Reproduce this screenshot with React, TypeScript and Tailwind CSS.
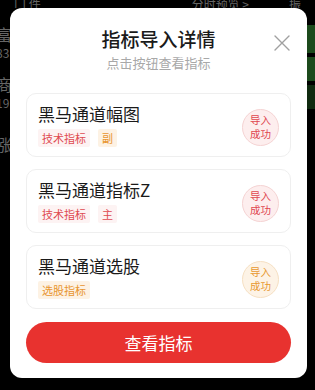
import React from "react";

type Tag = { text: string; tone: "red" | "orange" };
type Item = { title: string; tags: Tag[]; tone: "red" | "orange" };

const items: Item[] = [
  { title: "黑马通道幅图", tags: [{ text: "技术指标", tone: "red" }, { text: "副", tone: "orange" }], tone: "red" },
  { title: "黑马通道指标Z", tags: [{ text: "技术指标", tone: "red" }, { text: "主", tone: "red" }], tone: "red" },
  { title: "黑马通道选股", tags: [{ text: "选股指标", tone: "orange" }], tone: "orange" },
];

function TagChip({ tag }: { tag: Tag }) {
  return (
    <span
      className={
        tag.tone === "red"
          ? "h-[18px] px-[4px] rounded-[2px] bg-[#fdf3f3] text-[#df4a50] text-[11px] leading-[18px]"
          : "h-[18px] px-[4px] rounded-[2px] bg-[#fdf2e4] text-[#e8952f] text-[11px] leading-[18px]"
      }
    >
      {tag.text}
    </span>
  );
}

function Badge({ tone }: { tone: "red" | "orange" }) {
  return (
    <div
      className={
        tone === "red"
          ? "w-[37px] h-[37px] rounded-full bg-[#fdeeee] border border-[#f5d3d3] flex flex-col items-center justify-center text-[#e0474f] text-[10.5px] leading-[14px]"
          : "w-[37px] h-[37px] rounded-full bg-[#fdf3e6] border border-[#f6e0c3] flex flex-col items-center justify-center text-[#e8982f] text-[10.5px] leading-[14px]"
      }
    >
      <span className="block">导入</span>
      <span className="block">成功</span>
    </div>
  );
}

export default function App() {
  return (
    <div
      className="relative w-[315px] h-[390px] bg-black overflow-hidden"
      style={{ fontFamily: '"Noto Sans CJK SC", "Noto Sans", sans-serif' }}
    >
      {/* dimmed app behind */}
      <div className="flex flex-col text-[#666666]">
        <div className="h-[8px] flex items-start justify-between px-[14px] text-[12px] leading-[8px] overflow-hidden">
          <span>囗 件</span>
          <span className="ml-auto mr-[40px]">分时预览 &gt;</span>
          <span>振</span>
        </div>
        <div className="flex justify-between">
          <div className="flex flex-col -ml-[4px] pt-[16px]">
            <span className="text-[16px] leading-[20px]">富</span>
            <span className="mt-[2px] text-[12px] leading-[14px]">83</span>
            <span className="mt-[14px] text-[16px] leading-[20px]">商</span>
            <span className="mt-[2px] text-[12px] leading-[14px]">19</span>
            <span className="mt-[24px] text-[16px] leading-[20px]">涨</span>
          </div>
          <div className="flex flex-col w-[8px] pt-[17px] gap-[4px]">
            <div className="h-[28px] bg-[#1c4a1c]" />
            <div className="h-[24px] bg-[#1c4a1c]" />
            <div className="h-[24px] bg-[#102a10]" />
          </div>
        </div>
      </div>

      {/* modal overlay */}
      <div className="absolute left-[10px] top-[8px] w-[297px] h-[370px] bg-white rounded-[12px] flex flex-col items-center pt-[18px] px-[16px]">
        <button className="absolute right-[17px] top-[27px] w-[16px] h-[16px]">
          <svg viewBox="0 0 16 16" width="16" height="16" fill="none" stroke="#a0a0a0" strokeWidth="1.4" strokeLinecap="round">
            <path d="M1 1L15 15M15 1L1 15" />
          </svg>
        </button>
        <div className="text-[19px] leading-[26px] font-medium text-[#1a1a1a]">指标导入详情</div>
        <div className="mt-[2px] text-[13px] leading-[18px] text-[#a8a8a8]">点击按钮查看指标</div>

        <div className="mt-[21px] w-full flex flex-col gap-[12px]">
          {items.map((it) => (
            <div
              key={it.title}
              className="h-[64px] w-full rounded-[10px] border border-[#efefef] flex items-center justify-between pl-[11px] pr-[11px]"
            >
              <div className="flex flex-col self-start pt-[9px]">
                <div className="text-[17px] leading-[22px] text-[#1a1a1a]">{it.title}</div>
                <div className="mt-[4px] flex gap-[8px]">
                  {it.tags.map((t) => (
                    <TagChip key={t.text} tag={t} />
                  ))}
                </div>
              </div>
              <div className="mt-[4px]">
                <Badge tone={it.tone} />
              </div>
            </div>
          ))}
        </div>

        <button className="mt-[13px] w-full h-[41px] rounded-full bg-[#e8322f] text-white text-[17px] leading-[41px]">
          查看指标
        </button>
      </div>
    </div>
  );
}
